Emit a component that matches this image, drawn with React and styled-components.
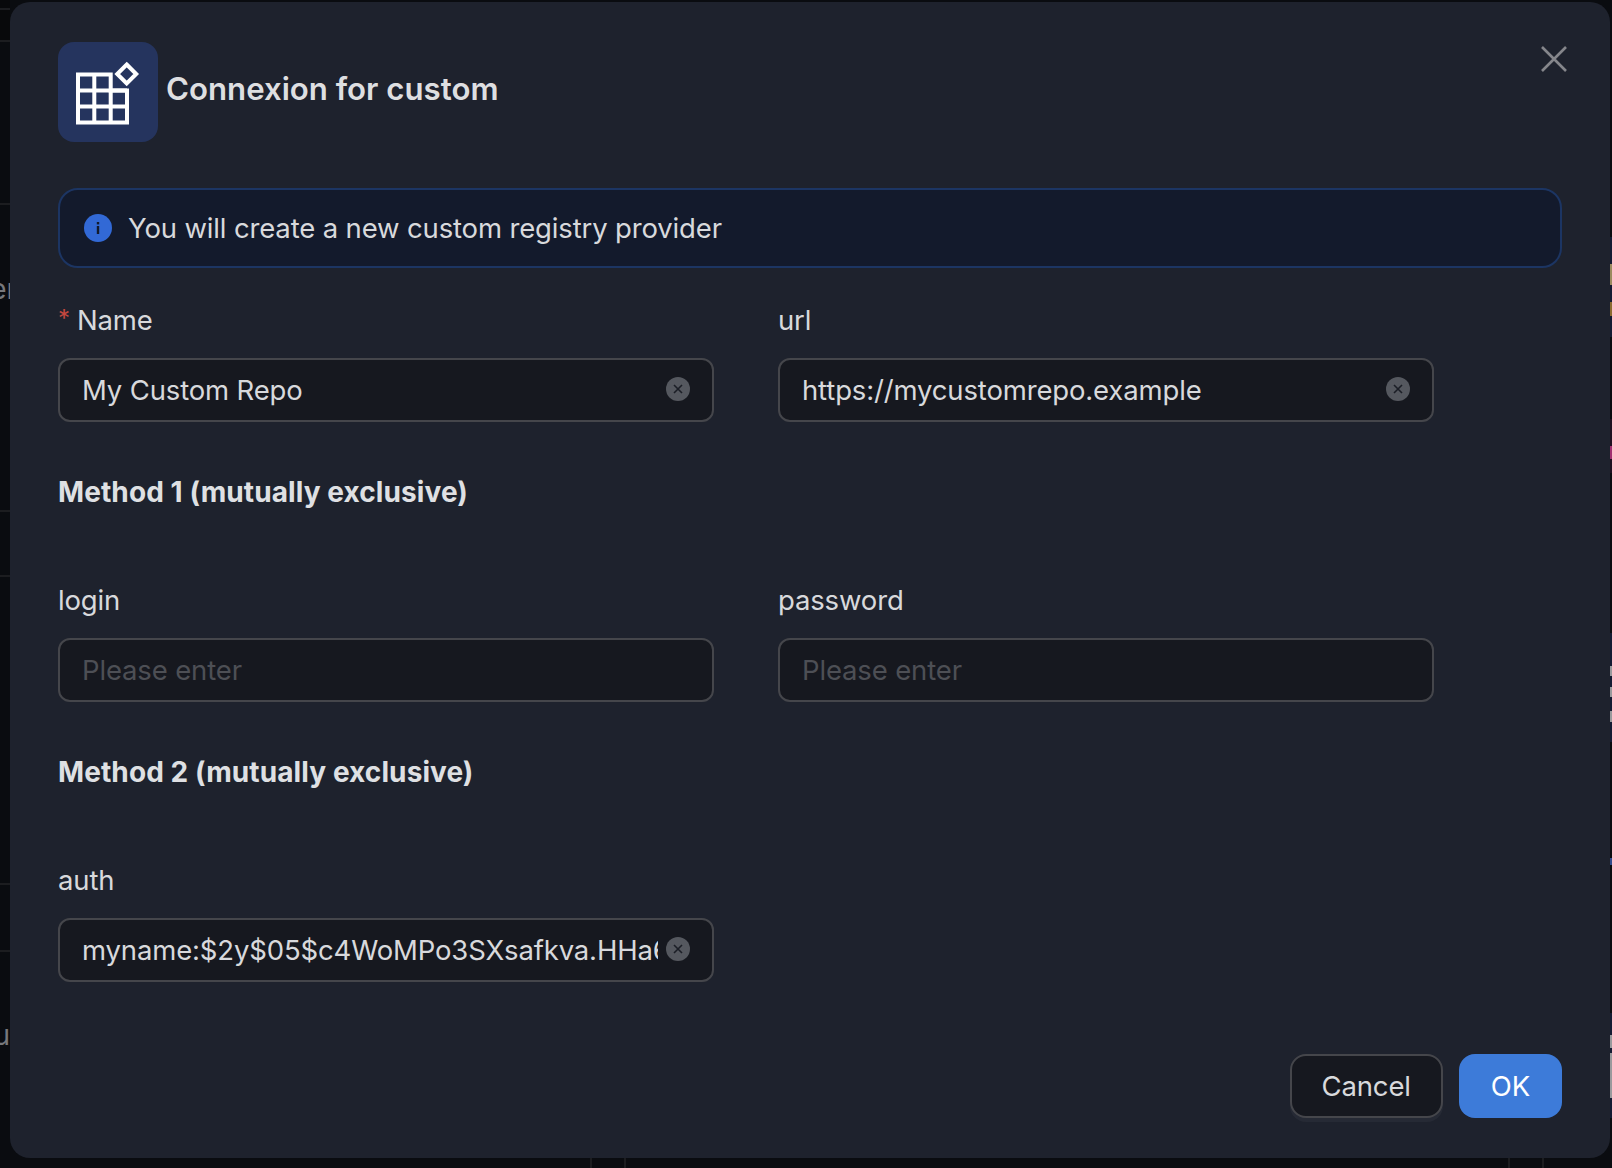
import React from 'react';
import styled, { createGlobalStyle } from 'styled-components';

const GlobalStyle = createGlobalStyle`
  html, body {
    margin: 0;
    padding: 0;
    background: #0a0c10;
  }
  * {
    box-sizing: border-box;
  }
`;

const Page = styled.div`
  position: relative;
  display: flex;
  width: 1612px;
  height: 1168px;
  padding: 2px 2px 10px 10px;
  overflow: hidden;
  font-family: Inter, "Noto Sans", sans-serif;
  background: #0a0c10;
`;

/* what is left visible of the page behind the dialog */
const Backdrop = styled.div`
  position: absolute;
  inset: 0;
  display: flex;
  justify-content: space-between;
`;
const LeftRail = styled.div`
  display: flex;
  flex-direction: column;
  width: 10px;
  overflow: hidden;
`;
const RailRow = styled.div`
  display: flex;
  align-items: center;
  justify-content: flex-end;
  height: ${p => p.$h}px;
  flex: none;
  border-bottom: ${p => (p.$noLine ? '0' : '2px solid #1c1d20')};
  background: ${p => p.$bg || 'transparent'};
  font-size: 28px;
  color: #77787c;
`;
const RailText = styled.span`
  margin-right: ${p => p.$shift || 0}px;
`;
const RightRail = styled.div`
  display: flex;
  flex-direction: column;
  width: 2px;
`;
const Sliver = styled.div`
  height: ${p => p.$h}px;
  flex: none;
  background: ${p => p.$c};
`;
const BottomRail = styled.div`
  position: absolute;
  left: 590px;
  bottom: 0;
  display: flex;
  height: 10px;
`;
const BottomCell = styled.div`
  width: ${p => p.$w}px;
  height: 10px;
  flex: none;
  border-left: 2px solid #1c1d20;
`;

const Modal = styled.div`
  position: relative;
  flex: 1;
  display: flex;
  flex-direction: column;
  padding: 40px 48px;
  border-radius: 20px;
  background: #1e222d;
`;
const CloseButton = styled.button`
  position: absolute;
  top: 42px;
  right: 41px;
  display: flex;
  padding: 0;
  border: 0;
  background: none;
  color: #85868b;
`;
const Header = styled.div`
  display: flex;
  align-items: center;
  gap: 8px;
  height: 100px;
`;
const IconTile = styled.div`
  width: 100px;
  height: 100px;
  border-radius: 16px;
  background: #25345e;
`;
const Title = styled.div`
  margin-top: -6px;
  font-size: 31.2px;
  font-weight: 600;
  color: #dedfe1;
`;
const Alert = styled.div`
  display: flex;
  align-items: center;
  gap: 16px;
  height: 80px;
  margin-top: 46px;
  padding: 0 24px;
  border: 2px solid #1c3563;
  border-radius: 20px;
  background: #131a2c;
  font-size: 27.5px;
  letter-spacing: -0.15px;
  color: #d8d9dc;
`;
const Row = styled.div`
  display: grid;
  grid-template-columns: 656px 656px;
  column-gap: 64px;
  margin-top: ${p => p.$top}px;
`;
const Label = styled.label`
  display: flex;
  align-items: center;
  height: 44px;
  margin-bottom: 16px;
  font-size: 27.5px;
  letter-spacing: -0.15px;
  color: #d8d9dc;
`;
const Star = styled.span`
  margin-right: 7px;
  margin-top: -4px;
  font-size: 24px;
  color: #c4483f;
`;
const SectionTitle = styled.div`
  height: 44px;
  margin-top: ${p => p.$top}px;
  font-size: 28px;
  line-height: 44px;
  font-weight: 700;
  letter-spacing: 0.09px;
  color: #dfe0e3;
`;
const InputBox = styled.div`
  display: flex;
  align-items: center;
  gap: 8px;
  height: 64px;
  padding: 0 22px;
  border: 2px solid #45464b;
  border-radius: 12px;
  background: #16181f;
`;
const TextInput = styled.input`
  flex: 1;
  min-width: 0;
  padding: 0;
  border: 0;
  outline: 0;
  background: none;
  font: inherit;
  font-size: 27.5px;
  letter-spacing: -0.15px;
  color: #d8d9dc;
  &::placeholder {
    color: #4d4f55;
    opacity: 1;
  }
`;
const ClearIcon = styled.svg`
  flex: none;
  width: 24px;
  height: 24px;
  margin-top: -2px;
`;
const Footer = styled.div`
  display: flex;
  justify-content: flex-end;
  gap: 16px;
  margin-top: auto;
`;
const Button = styled.button`
  height: 64px;
  padding: 0 ${p => (p.$primary ? 32 : 30)}px;
  border: ${p => (p.$primary ? '0' : '2px solid #45464b')};
  border-radius: 16px;
  background: ${p => (p.$primary ? '#3d7bd9' : '#16181f')};
  box-shadow: ${p => (p.$primary ? 'none' : '0 4px 0 rgba(255, 255, 255, 0.04)')};
  font-family: inherit;
  font-size: 27.5px;
  letter-spacing: -0.15px;
  color: ${p => (p.$primary ? '#ffffff' : '#d8d9dc')};
`;

const leftRows = [
  { h: 10, bg: '#08090b' },
  { h: 32, bg: '#08090b' },
  { h: 163 },
  { h: 168, text: 'er', shift: -7, noLine: true },
  { h: 139 },
  { h: 65 },
  { h: 308 },
  { h: 67 },
  { h: 166, text: 'u', noLine: true },
];

const rightSlivers = [
  [237, '#0a0c10'], [27, '#141b33'], [21, '#9a8a5f'], [17, '#141b33'], [14, '#8a6a30'], [21, '#141b33'],
  [82, '#0a0c10'], [27, '#1e1020'], [13, '#a03070'], [14, '#1e1020'],
  [160, '#0a0c10'], [33, '#141b33'], [10, '#99999c'], [11, '#141b33'], [10, '#99999c'], [14, '#141b33'], [11, '#99999c'], [20, '#141b33'],
  [116, '#0a0c10'], [7, '#334a8a'],
  [148, '#0a0c10'], [22, '#141b33'], [13, '#99999c'], [5, '#141b33'], [45, '#99999c'], [20, '#141b33'],
  [78, '#0a0c10'], [3, '#141b33'],
];

const GridIcon = () => (
  <svg width="100" height="100" viewBox="0 0 100 100" fill="none" stroke="#fff" strokeWidth="4">
    <path d="M20 32.5H52.7V48.5H69V80.5H20Z" />
    <path d="M36.3 32.5V80.5M52.7 48.5V80.5M20 48.5H69M20 64.5H69" />
    <path d="M68.7 22.5L78.2 32L68.7 41.5L59.2 32Z" />
  </svg>
);

const InfoIcon = () => (
  <svg width="28" height="28" viewBox="0 0 28 28" style={{ flex: 'none' }}>
    <circle cx="14" cy="14" r="14" fill="#3269d6" />
    <rect x="12.8" y="12" width="2.4" height="8" fill="#131a2c" />
    <rect x="12.8" y="8" width="2.4" height="2.4" fill="#131a2c" />
  </svg>
);

const Clear = () => (
  <ClearIcon viewBox="0 0 24 24">
    <circle cx="12" cy="12" r="12" fill="#55585f" />
    <path d="M8 8L16 16M16 8L8 16" stroke="#1b1e26" strokeWidth="1.6" />
  </ClearIcon>
);

const Field = ({ label, required, value, placeholder }) => (
  <div>
    <Label>
      {required && <Star>*</Star>}
      {label}
    </Label>
    <InputBox>
      <TextInput readOnly value={value} placeholder={placeholder} />
      {value && <Clear />}
    </InputBox>
  </div>
);

export default function App() {
  return (
    <Page>
      <GlobalStyle />
      <Backdrop>
        <LeftRail>
          {leftRows.map((r, i) => (
            <RailRow key={i} $h={r.h} $bg={r.bg} $noLine={r.noLine}>
              {r.text && <RailText $shift={r.shift}>{r.text}</RailText>}
            </RailRow>
          ))}
        </LeftRail>
        <RightRail>
          {rightSlivers.map(([h, c], i) => (
            <Sliver key={i} $h={h} $c={c} />
          ))}
        </RightRail>
        <BottomRail>
          <BottomCell $w={34} />
          <BottomCell $w={884} />
          <BottomCell $w={34} />
          <BottomCell $w={34} />
        </BottomRail>
      </Backdrop>
      <Modal>
        <CloseButton aria-label="Close">
          <svg width="30" height="30" viewBox="0 0 30 30" fill="none" stroke="currentColor" strokeWidth="2.6">
            <path d="M3 3L27 27M27 3L3 27" />
          </svg>
        </CloseButton>
        <Header>
          <IconTile>
            <GridIcon />
          </IconTile>
          <Title>Connexion for custom</Title>
        </Header>
        <Alert>
          <InfoIcon />
          You will create a new custom registry provider
        </Alert>
        <Row $top={30}>
          <Field label="Name" required value="My Custom Repo" />
          <Field label="url" value="https://mycustomrepo.example" />
        </Row>
        <SectionTitle $top={48}>Method 1 (mutually exclusive)</SectionTitle>
        <Row $top={64}>
          <Field label="login" placeholder="Please enter" />
          <Field label="password" placeholder="Please enter" />
        </Row>
        <SectionTitle $top={48}>Method 2 (mutually exclusive)</SectionTitle>
        <Row $top={64}>
          <Field label="auth" value="myname:$2y$05$c4WoMPo3SXsafkva.HHa6" />
        </Row>
        <Footer>
          <Button>Cancel</Button>
          <Button $primary>OK</Button>
        </Footer>
      </Modal>
    </Page>
  );
}
